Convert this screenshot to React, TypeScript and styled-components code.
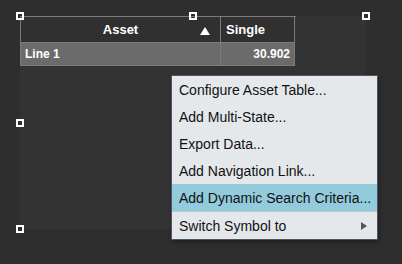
import React from "react";
import styled, { createGlobalStyle } from "styled-components";

const GlobalStyle = createGlobalStyle`
  html, body {
    margin: 0;
    padding: 0;
    background: #2e2e2e;
    width: 402px;
    height: 264px;
    overflow: hidden;
  }
`;

const Page = styled.div`
  position: relative;
  width: 402px;
  height: 264px;
  padding: 16px 0 0 20px;
  box-sizing: border-box;
`;

const Symbol = styled.div`
  position: relative;
  width: 346px;
  height: 213px;
  background: #333333;
`;

const Table = styled.div`
  display: grid;
  grid-template-columns: 200px 74px;
  width: 275px;
  border-left: 1px solid #7c7c7c;
  border-top: 1px solid #7c7c7c;
  font-family: "Liberation Sans", Arial, sans-serif;
  color: #ffffff;
`;

const HeaderCell = styled.div<{ center?: boolean }>`
  position: relative;
  height: 25px;
  display: flex;
  align-items: center;
  justify-content: ${(p) => (p.center ? "center" : "flex-start")};
  padding: 0 5px;
  font-size: 13px;
  font-weight: 700;
  border-right: 1px solid #7c7c7c;
  border-bottom: 1px solid #7c7c7c;
  background: #303030;
`;

const SortArrow = styled.svg`
  position: absolute;
  right: 10px;
  top: 10px;
`;

const Cell = styled.div<{ right?: boolean }>`
  height: 22px;
  display: flex;
  align-items: center;
  justify-content: ${(p) => (p.right ? "flex-end" : "flex-start")};
  padding: 0 4px;
  font-size: 12px;
  font-weight: 700;
  background: #6b6b6b;
  border-right: 1px solid #7c7c7c;
  border-bottom: 1px solid #7c7c7c;
`;

const Handle = styled.div<{ x: number; y: number }>`
  position: absolute;
  left: ${(p) => p.x - 4}px;
  top: ${(p) => p.y - 4}px;
  width: 8px;
  height: 8px;
  box-sizing: border-box;
  border: 2px solid #ffffff;
`;

const Menu = styled.div`
  position: absolute;
  left: 171px;
  top: 75px;
  width: 207px;
  box-sizing: border-box;
  background: #e4e8eb;
  border: 1px solid #4d5560;
  box-shadow: 1px 2px 4px rgba(0, 0, 0, 0.35);
  font-family: "Liberation Sans", Arial, sans-serif;
  font-size: 14px;
  color: #111111;
  white-space: nowrap;
`;

const Item = styled.div<{ active?: boolean }>`
  height: 27px;
  display: flex;
  align-items: center;
  justify-content: space-between;
  padding: 0 9px 0 7px;
  background: ${(p) => (p.active ? "#93cadc" : "transparent")};
`;

const Separator = styled.div`
  height: 1px;
  background: #c4c8cc;
`;

const SubArrow = styled.svg`
  margin-right: 1px;
`;

const handles = [
  [20, 16],
  [193, 16],
  [366, 16],
  [20, 123],
  [366, 123],
  [20, 229],
  [193, 229],
  [366, 229],
];

export default function App() {
  return (
    <Page>
      <GlobalStyle />
      <Symbol>
        <Table>
          <HeaderCell center>
            Asset
            <SortArrow width="10" height="8" viewBox="0 0 10 8">
              <path d="M5 0 L10 8 L0 8 Z" fill="#ffffff" />
            </SortArrow>
          </HeaderCell>
          <HeaderCell>Single</HeaderCell>
          <Cell>Line 1</Cell>
          <Cell right>30.902</Cell>
        </Table>
      </Symbol>
      {handles.map(([x, y]) => (
        <Handle key={`${x}-${y}`} x={x} y={y} />
      ))}
      <Menu>
        <Item>Configure Asset Table...</Item>
        <Item>Add Multi-State...</Item>
        <Item>Export Data...</Item>
        <Item>Add Navigation Link...</Item>
        <Item active>Add Dynamic Search Criteria...</Item>
        <Separator />
        <Item>
          Switch Symbol to
          <SubArrow width="6" height="8" viewBox="0 0 6 8">
            <path d="M0 0 L6 4 L0 8 Z" fill="#555555" />
          </SubArrow>
        </Item>
      </Menu>
    </Page>
  );
}
